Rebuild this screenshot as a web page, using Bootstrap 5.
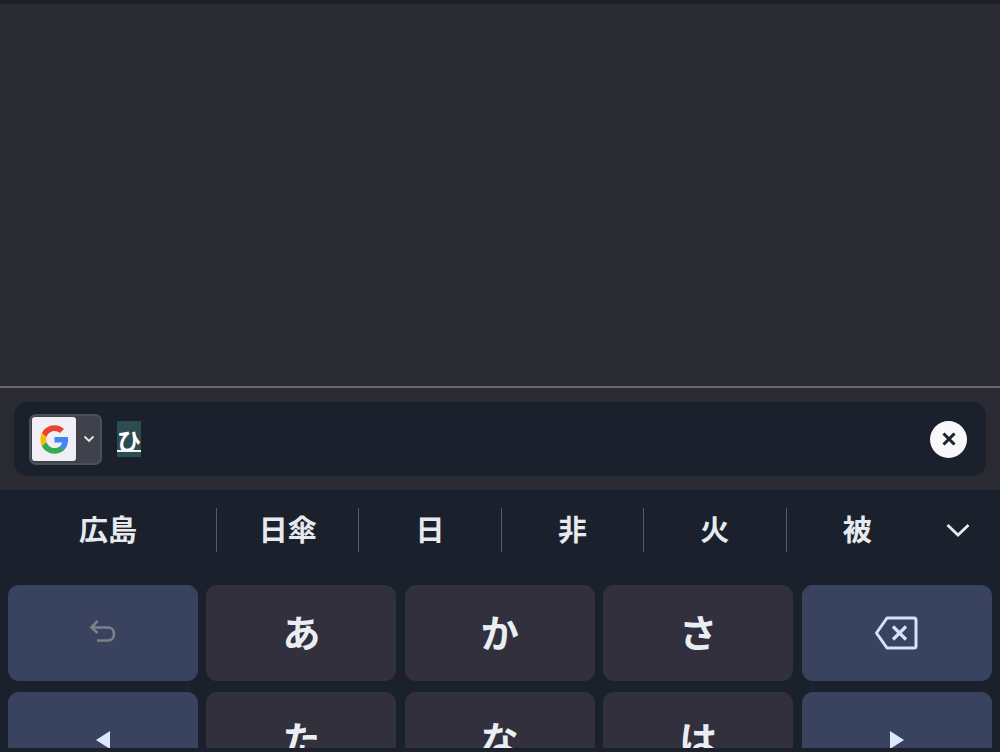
<!DOCTYPE html>
<html lang="ja">
<head>
  <meta charset="UTF-8">
  <meta name="viewport" content="width=device-width, initial-scale=1.0">
  <title>Keyboard</title>
  <link href="https://cdn.jsdelivr.net/npm/bootstrap@5.3.0/dist/css/bootstrap.min.css" rel="stylesheet">
  <style>
    html, body { height: 100%; }
    body { background: #1a202c; overflow: hidden; font-family: "Noto Sans CJK JP", "Noto Sans", sans-serif; color: #e9eef4; }
    .screen { height: 752px; padding-top: 4px; padding-bottom: 4px; }
    .page-area { height: 382px; background: #2a2a32; }
    .rule-line { height: 2px; background: #66666c; }
    .search-wrap { height: 102px; background: #2a2a32; padding: 14px; }
    .search-field { height: 74px; background: #1a202c; border-radius: 14px; padding: 0 19px 0 15px; }
    .engine-btn { width: 73px; height: 51px; background: #3f414b; border: 2px solid #4d505c; border-radius: 7px; padding: 1px; }
    .engine-logo { width: 44px; height: 44px; background: #f1eff6; border-radius: 3px; }
    .engine-caret { flex: 1; padding-left: 3px; }
    .typed-text { margin-left: 15px; width: 24px; height: 36px; background: #2d4c50; color: #fff; font-size: 24px; line-height: 37px; text-align: center; position: relative; font-weight: 700; overflow: hidden; }
    .typed-text::after { content: ""; position: absolute; left: 0; right: 0; bottom: 5px; height: 2px; background: #f2f5f5; }
    .clear-btn { width: 37px; height: 37px; background: #f8f8fa; border-radius: 50%; }
    .suggest-bar { height: 85px; display: grid; grid-template-columns: 216px repeat(5, 142.4px) 1fr; padding-top: 18px; align-items: start; }
    .suggest-item { height: 44px; font-size: 29px; line-height: 41px; font-weight: 700; text-align: center; color: #e6e9ee; }
    .suggest-item + .suggest-item { border-left: 1px solid #565a66; }
    .suggest-more { height: 44px; padding-right: 12px; }
    .keys-area { height: 173px; overflow: hidden; padding: 10px 8px 0; display: grid; grid-template-columns: repeat(5, 190px); column-gap: 8.45px; row-gap: 11px; grid-auto-rows: 96px; }
    .kb-key { border-radius: 11px; font-size: 38px; font-weight: 700; line-height: 1; color: #e9eef4; padding-bottom: 5px; }
    .kb-char { background: #31303c; }
    .kb-func { background: #39435f; }
    .kb-icon { padding-bottom: 0; }
  </style>
</head>
<body>
  <div class="screen d-flex flex-column">
    <div class="page-area"></div>
    <div class="rule-line"></div>
    <div class="search-wrap">
      <div class="search-field d-flex align-items-center">
        <div class="engine-btn d-flex align-items-center">
          <div class="engine-logo d-flex align-items-center justify-content-center">
            <svg width="31" height="31" viewBox="0 0 48 48">
              <path fill="#4285F4" d="M45.1 24.5c0-1.6-.1-3.100-.4-4.500H24v8.500h11.800c-.5 2.800-2.100 5.100-4.400 6.700v5.500h7.100c4.200-3.800 6.600-9.500 6.600-16.200z"/>
              <path fill="#34A853" d="M24 46c5.900 0 10.900-2 14.500-5.300l-7.100-5.500c-2 1.300-4.500 2.100-7.400 2.100-5.700 0-10.500-3.800-12.200-9H4.500v5.700C8.100 41.100 15.500 46 24 46z"/>
              <path fill="#FBBC05" d="M11.800 28.300c-.4-1.300-.7-2.800-.7-4.300s.3-3 .7-4.300V14H4.500C3 17 2.200 20.400 2.200 24s.8 7 2.300 10l7.300-5.700z"/>
              <path fill="#EA4335" d="M24 10.700c3.200 0 6.100 1.100 8.400 3.300l6.300-6.300C34.900 4.200 29.900 2 24 2 15.500 2 8.100 6.900 4.500 14l7.300 5.700c1.700-5.200 6.500-9 12.200-9z"/>
            </svg>
          </div>
          <div class="engine-caret d-flex justify-content-center">
            <svg width="12" height="8" viewBox="0 0 12 8"><path d="M1.500 1.500 6 6l4.500-4.500" fill="none" stroke="#e6e8ee" stroke-width="1.800"/></svg>
          </div>
        </div>
        <div class="typed-text">ひ</div>
        <div class="clear-btn ms-auto d-flex align-items-center justify-content-center">
          <svg width="16" height="16" viewBox="0 0 16 16"><path d="M2.500 2.500l11 11M13.500 2.500l-11 11" stroke="#1a202c" stroke-width="3" fill="none"/></svg>
        </div>
      </div>
    </div>
    <div class="suggest-bar">
      <div class="suggest-item">広島</div>
      <div class="suggest-item">日傘</div>
      <div class="suggest-item">日</div>
      <div class="suggest-item">非</div>
      <div class="suggest-item">火</div>
      <div class="suggest-item">被</div>
      <div class="suggest-more d-flex align-items-center justify-content-center">
        <svg width="26" height="16" viewBox="0 0 26 16"><path d="M2.500 3 13 13 23.500 3" fill="none" stroke="#e6e9ee" stroke-width="2.800"/></svg>
      </div>
    </div>
    <div class="keys-area">
      <div class="kb-key kb-icon kb-func d-flex align-items-center justify-content-center">
        <svg width="28" height="28" viewBox="0 0 28 28"><path d="M8.500 2 2.500 8.500 8.500 14M3 8.500h16c8 0 8 13 0 13H8" fill="none" stroke="#7b8188" stroke-width="2.600"/></svg>
      </div>
      <div class="kb-key kb-char d-flex align-items-center justify-content-center">あ</div>
      <div class="kb-key kb-char d-flex align-items-center justify-content-center">か</div>
      <div class="kb-key kb-char d-flex align-items-center justify-content-center">さ</div>
      <div class="kb-key kb-icon kb-func d-flex align-items-center justify-content-center">
        <svg width="44" height="36" viewBox="0 0 44 36"><path d="M12 3h27a2 2 0 0 1 2 2v26a2 2 0 0 1-2 2H12L1.500 18z" fill="none" stroke="#d5e3f8" stroke-width="3" stroke-linejoin="round"/><path d="M18 11.500l13 13M31 11.500l-13 13" stroke="#d5e3f8" stroke-width="3.200" fill="none"/></svg>
      </div>
      <div class="kb-key kb-icon kb-func d-flex align-items-center justify-content-center">
        <svg width="16" height="18" viewBox="0 0 16 18"><path d="M15 0v18L1 9z" fill="#dce8fb"/></svg>
      </div>
      <div class="kb-key kb-char d-flex align-items-center justify-content-center">た</div>
      <div class="kb-key kb-char d-flex align-items-center justify-content-center">な</div>
      <div class="kb-key kb-char d-flex align-items-center justify-content-center">は</div>
      <div class="kb-key kb-icon kb-func d-flex align-items-center justify-content-center">
        <svg width="16" height="18" viewBox="0 0 16 18"><path d="M1 0v18l14-9z" fill="#dce8fb"/></svg>
      </div>
    </div>
  </div>
  <script src="https://cdn.jsdelivr.net/npm/bootstrap@5.3.0/dist/js/bootstrap.bundle.min.js"></script>
</body>
</html>
